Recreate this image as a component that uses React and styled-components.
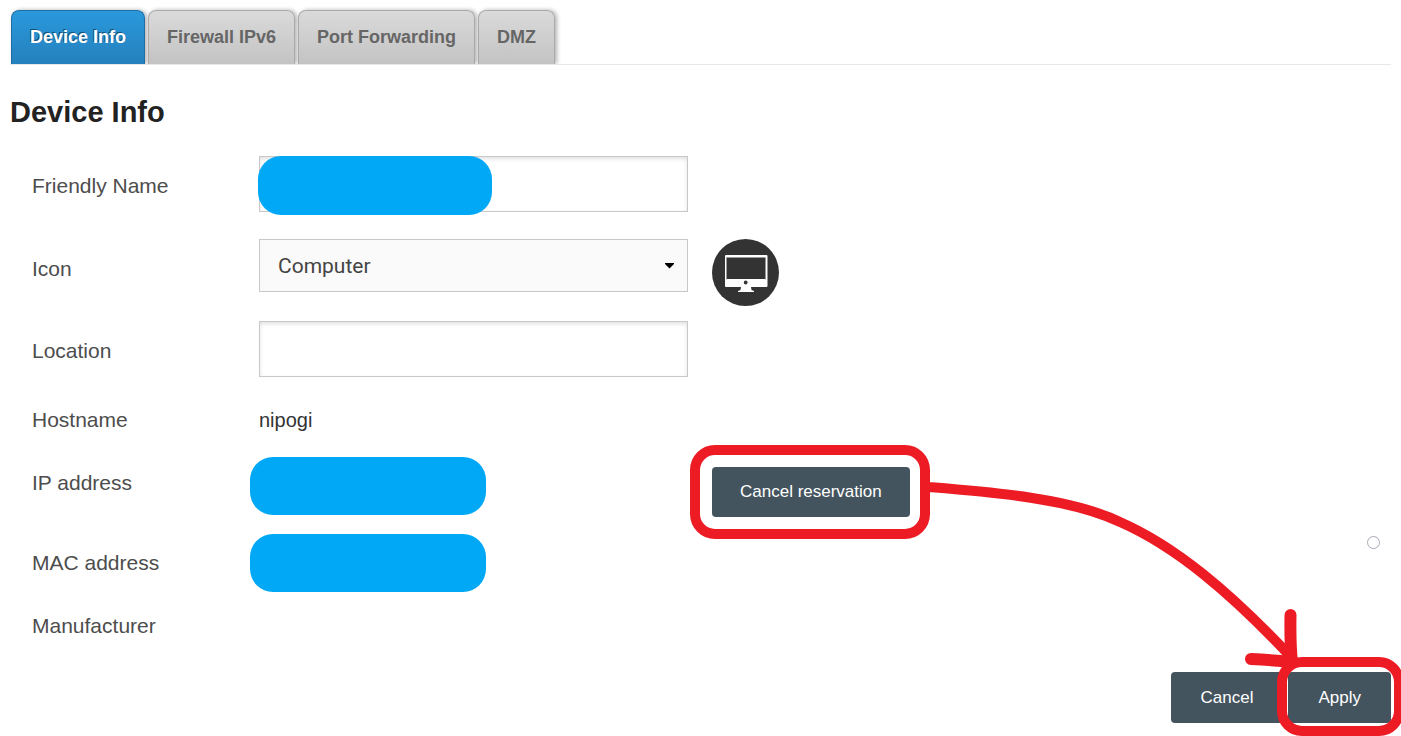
import React from "react";
import styled, { createGlobalStyle } from "styled-components";

const GlobalStyle = createGlobalStyle`
  *, *::before, *::after { box-sizing: border-box; }
  body {
    margin: 0;
    background: #fff;
    color: #4d4d4d;
    font-family: "Liberation Sans", Arial, sans-serif;
  }
`;

const Page = styled.main`
  position: relative;
  overflow: hidden;
  padding: 10px 10px 13px;
`;

const Tabs = styled.nav`
  display: flex;
  gap: 3px;
  padding-left: 1px;
  border-bottom: 1px solid #e8e8e8;
`;

const Tab = styled.a`
  height: 54px;
  padding: 0 18px;
  border: 1px solid ${(p) => (p.$active ? "#1c6ea4" : "#aaa")};
  border-bottom: 0;
  border-radius: 8px 8px 0 0;
  background: ${(p) =>
    p.$active
      ? "linear-gradient(#2a99dc, #2580bd)"
      : "linear-gradient(#dadada, #c3c3c3)"};
  box-shadow: 2px 0 4px rgba(0, 0, 0, 0.3);
  clip-path: inset(-4px -6px 0 -3px);
  color: ${(p) => (p.$active ? "#fff" : "#666")};
  text-shadow: ${(p) => (p.$active ? "-1px -1px 0 #145078" : "none")};
  font-size: 18px;
  font-weight: bold;
  line-height: 52px;
  text-decoration: none;
  white-space: nowrap;
`;

const Title = styled.h1`
  margin: 30px 0 27px;
  color: #222;
  font-size: 29px;
  line-height: 34px;
`;

const Row = styled.div`
  display: flex;
  align-items: flex-start;
  height: ${(p) => p.$height}px;
  padding-left: 22px;
`;

const Label = styled.label`
  flex: 0 0 227px;
  padding-top: ${(p) => (p.$inline ? 0 : 18)}px;
  font-size: 21px;
  line-height: 24px;
`;

const Field = styled.div`
  position: relative;
  flex: 0 1 429px;
  margin-right: 24px;
`;

const TextInput = styled.input`
  display: block;
  width: 100%;
  height: 56px;
  padding: 0 18px;
  border: 1px solid #c8c8c8;
  border-radius: 0;
  outline: 0;
  background: #fff;
  box-shadow: inset 0 2px 4px rgba(0, 0, 0, 0.12);
  color: #333;
  font: 20px "Liberation Sans", Arial, sans-serif;
`;

const Select = styled.select`
  display: block;
  width: 100%;
  height: 53px;
  padding: 0 18px;
  border: 1px solid #c8c8c8;
  border-radius: 0;
  appearance: none;
  background: #fafafa;
  color: #444;
  font: 21px Roboto, "Open Sans", sans-serif;
`;

const Caret = styled.svg`
  position: absolute;
  top: 24px;
  right: 14px;
  width: 9px;
  height: 6px;
  pointer-events: none;
`;

const Value = styled.output`
  display: block;
  color: #333;
  font-size: 20px;
  line-height: 24px;
`;

const Redaction = styled.span`
  position: absolute;
  top: ${(p) => p.$top}px;
  left: ${(p) => p.$left}px;
  width: ${(p) => p.$width || 236}px;
  height: ${(p) => p.$height || 58}px;
  border-radius: 23px;
  background: #00a8f5;
`;

const DeviceIcon = styled.svg`
  flex: none;
  width: 67px;
  height: 67px;
`;

const Button = styled.button`
  height: ${(p) => (p.$wide ? 50 : 51)}px;
  padding: 0 ${(p) => (p.$wide ? 28 : 30)}px;
  border: 0;
  border-radius: 4px;
  background: #44545e;
  color: #fff;
  font: 17px "Liberation Sans", Arial, sans-serif;
  white-space: nowrap;
`;

const Marked = styled.div`
  position: relative;
  &::after {
    content: "";
    position: absolute;
    inset: ${(p) => p.$inset};
    border: 10px solid #ed1c24;
    border-radius: 25px;
    pointer-events: none;
  }
`;

const ReservationSlot = styled.div`
  margin-top: -4px;
`;

const Footer = styled.footer`
  display: flex;
  justify-content: flex-end;
  gap: 5px;
`;

const Arrow = styled.svg`
  position: absolute;
  top: 470px;
  left: 920px;
  width: calc(100% - 1020px);
  height: 210px;
  pointer-events: none;
`;

const Radio = styled.input`
  position: absolute;
  top: 536px;
  right: 21px;
  width: 13px;
  height: 13px;
  margin: 0;
  border: 1px solid #a9a9b8;
  border-radius: 50%;
  appearance: none;
`;

const tabs = ["Device Info", "Firewall IPv6", "Port Forwarding", "DMZ"];

export default function App() {
  return (
    <Page>
      <GlobalStyle />
      <Tabs>
        {tabs.map((name, i) => (
          <Tab key={name} href="#" $active={i === 0}>
            {name}
          </Tab>
        ))}
      </Tabs>
      <Title>Device Info</Title>
      <form onSubmit={(e) => e.preventDefault()}>
        <Row $height={83}>
          <Label htmlFor="name">Friendly Name</Label>
          <Field>
            <TextInput id="name" />
            <Redaction $top={0} $left={-1} $width={234} $height={59} />
          </Field>
        </Row>
        <Row $height={82}>
          <Label htmlFor="icon">Icon</Label>
          <Field>
            <Select id="icon">
              <option>Computer</option>
            </Select>
            <Caret viewBox="0 0 9 6">
              <path d="M0 0h9v1L4.500 5.500 0 1z" />
            </Caret>
          </Field>
          <DeviceIcon viewBox="0 0 67 67">
            <circle cx="33.5" cy="33.5" r="33.5" fill="#333" />
            <path
              fill="#fff"
              fillRule="evenodd"
              d="M14 16h40.500q1 0 1 1v30q0 1-1 1H39l.5 3 2.500 1v1H26v-1l2.500-1 .5-3H14q-1 0-1-1V17q0-1 1-1zm1 3v21h38V19zm18.700 22.600a1.900 1.900 0 1 0 0 3.800 1.900 1.900 0 0 0 0-3.800z"
            />
            <path fill="none" stroke="#999" d="M14.500 40.500v-22h39v22" />
          </DeviceIcon>
        </Row>
        <Row $height={87}>
          <Label htmlFor="location">Location</Label>
          <Field>
            <TextInput id="location" />
          </Field>
        </Row>
        <Row $height={63}>
          <Label htmlFor="hostname" $inline>
            Hostname
          </Label>
          <Field>
            <Value id="hostname">nipogi</Value>
          </Field>
        </Row>
        <Row $height={80}>
          <Label htmlFor="ip" $inline>
            IP address
          </Label>
          <Field>
            <Value id="ip" />
            <Redaction $top={-14} $left={-9} />
          </Field>
          <ReservationSlot>
            <Marked $inset="-22px -20px -22px -22px">
              <Button type="button" $wide>
                Cancel reservation
              </Button>
            </Marked>
          </ReservationSlot>
        </Row>
        <Row $height={63}>
          <Label htmlFor="mac" $inline>
            MAC address
          </Label>
          <Field>
            <Value id="mac" />
            <Redaction $top={-17} $left={-9} />
          </Field>
        </Row>
        <Row $height={58}>
          <Label htmlFor="manufacturer" $inline>
            Manufacturer
          </Label>
          <Field>
            <Value id="manufacturer" />
          </Field>
        </Row>
        <Footer>
          <Button type="button">Cancel</Button>
          <Marked $inset="-15px -13px -13px -11px">
            <Button type="submit">Apply</Button>
          </Marked>
        </Footer>
        <Radio type="radio" aria-label="Status" />
      </form>
      <Arrow viewBox="0 0 381 210" preserveAspectRatio="none">
        <g fill="none" stroke="#ed1c24" strokeLinecap="round">
          <path
            strokeWidth="10"
            d="M8 17C70 22 150 28 200 52C255 76 310 122 371 187"
          />
          <path
            strokeWidth="12"
            strokeLinejoin="round"
            d="M370.500 145Q370 175 372 192Q350 190 331 189"
          />
        </g>
      </Arrow>
    </Page>
  );
}
